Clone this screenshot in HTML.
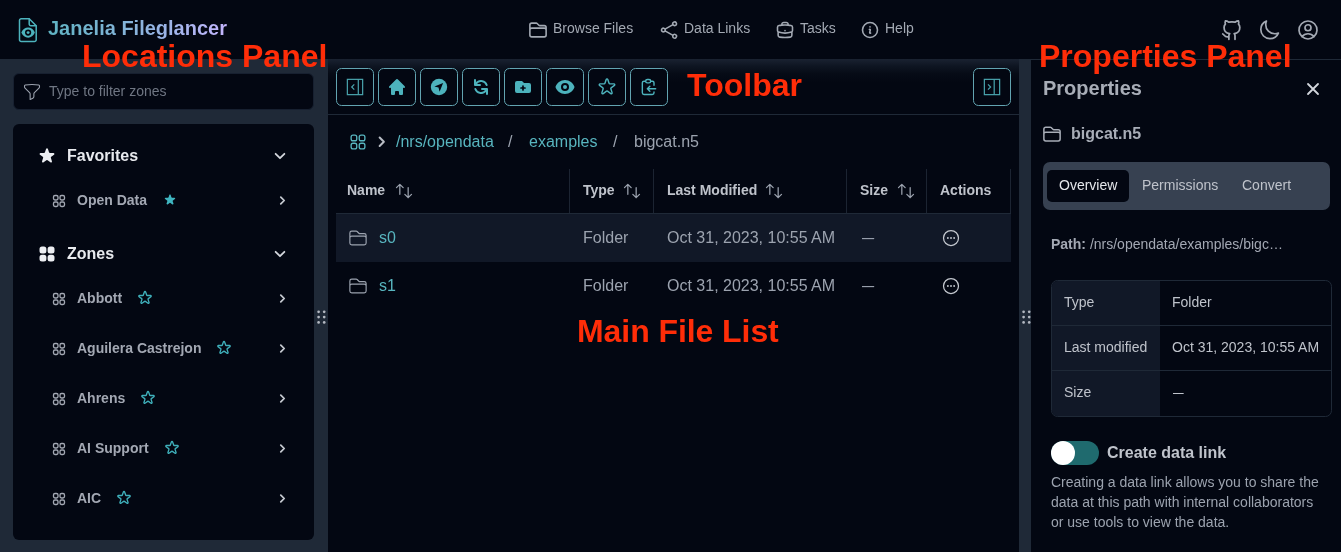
<!DOCTYPE html>
<html lang="en">
<head>
<meta charset="utf-8">
<title>Janelia Fileglancer</title>
<style>
*{box-sizing:border-box;margin:0;padding:0}
html,body{width:1341px;height:552px;overflow:hidden;background:#030712;font-family:"Liberation Sans",Arial,sans-serif;color:#9ca3af}
body{position:relative}
.abs{position:absolute}
svg{display:block;overflow:visible}
.t{position:absolute;white-space:nowrap}
.hdr,.left,.main,.props,.red{will-change:transform}
.hdr{position:absolute;left:0;top:0;width:1341px;height:59px;background:#030712}
.title{left:48px;top:17px;font-size:20px;line-height:23px;font-weight:700;background:linear-gradient(90deg,#5fb3c2 0%,#8fb4e0 55%,#c4b5fd 100%);-webkit-background-clip:text;background-clip:text;color:transparent}
.nav{top:20px;font-size:14px;line-height:16px;color:#a3a9b3}
.left{position:absolute;left:0;top:59px;width:328px;height:493px;background:#1f2937}
.filter{position:absolute;left:13px;top:14px;width:301px;height:37px;background:#030712;border-radius:6px;border:1px solid #172030}
.card{position:absolute;left:13px;top:65px;width:301px;height:416px;background:#030712;border-radius:6px}
.sec{left:54px;font-size:16px;line-height:18px;font-weight:700;color:#e8eaee}
.zone{left:64px;font-size:14px;line-height:16px;font-weight:700;color:#a3a8b3}
.main{position:absolute;left:328px;top:59px;width:691px;height:493px;background:#030712}
.tb{position:absolute;left:0;top:0;width:691px;height:56px;background:linear-gradient(180deg,#1a2231 0,#0e1522 7px,#060b16 15px,#030712 24px);border-bottom:1px solid #1f2937}
.btn{position:absolute;top:9px;width:38px;height:38px;border:1px solid #62a4b1;border-radius:5.5px;background:#030712}
.strip{position:absolute;left:1019px;top:59px;width:12px;height:493px;background:#1f2937}
.props{position:absolute;left:1031px;top:59px;width:310px;height:493px;background:#030712;border-top:1px solid #1f2937}
.red{position:absolute;font-weight:700;font-size:32px;line-height:36px;color:#ff2d08;white-space:nowrap}
.th{top:123px;font-size:14px;line-height:16px;font-weight:700;color:#bfc3cb}
.td{font-size:16px;line-height:18px;color:#9ca3af}
.tl{color:#58b5bf}
.sep{position:absolute;top:110px;width:1px;height:45px;background:#1c2432}
.p14{font-size:14px;line-height:16px}
.pc{color:#bfc3cb}
</style>
</head>
<body>
<div class="hdr">
<svg class="abs" style="left:16px;top:17px" width="24" height="26" viewBox="0 0 24 26" fill="none" stroke="#4db3bd" stroke-width="1.5" stroke-linejoin="round" stroke-linecap="round"><path d="M5.200 1.800h8l7 7v14a1.700 1.700 0 0 1-1.700 1.700H5.200a1.700 1.700 0 0 1-1.700-1.700V3.500a1.700 1.700 0 0 1 1.700-1.700z"/><path d="M13.200 2v5.100a1.700 1.700 0 0 0 1.700 1.700h5.100"/><path d="M5.300 15.600c1.500-3.400 3.900-5.100 6.800-5.100s5.300 1.700 6.800 5.100c-1.500 3.400-3.900 5.100-6.800 5.100s-5.300-1.700-6.800-5.100z" fill="#4db3bd" stroke="none"/><circle cx="12.100" cy="15.600" r="3.100" fill="#030712" stroke="none"/><circle cx="12.100" cy="15.600" r="1.450" fill="#4db3bd" stroke="none"/></svg>
<div class="t title">Janelia Fileglancer</div>
<svg class="abs" style="left:528px;top:20px" width="20" height="20" viewBox="0 0 24 24" fill="none" stroke="#a3a9b3" stroke-width="1.9" stroke-linecap="round" stroke-linejoin="round"><path d="M2.25 12.75V12A2.25 2.25 0 0 1 4.5 9.75h15A2.25 2.25 0 0 1 21.75 12v.75m-8.69-6.44-2.12-2.12a1.5 1.5 0 0 0-1.061-.44H4.5A2.25 2.25 0 0 0 2.25 6v12a2.25 2.25 0 0 0 2.25 2.25h15A2.25 2.25 0 0 0 21.75 18V9a2.25 2.25 0 0 0-2.25-2.25h-5.379a1.5 1.5 0 0 1-1.06-.44Z"/></svg>
<div class="t nav" style="left:553px">Browse Files</div>
<svg class="abs" style="left:659px;top:20px" width="20" height="20" viewBox="0 0 24 24" fill="none" stroke="#a3a9b3" stroke-width="1.9" stroke-linecap="round" stroke-linejoin="round"><path d="M7.217 10.907a2.25 2.25 0 1 0 0 2.186m0-2.186c.18.324.283.696.283 1.093s-.103.77-.283 1.093m0-2.186 9.566-5.314m-9.566 7.5 9.566 5.314m0 0a2.25 2.25 0 1 0 3.935 2.186 2.25 2.25 0 0 0-3.935-2.186Zm0-12.814a2.25 2.25 0 1 0 3.933-2.185 2.25 2.25 0 0 0-3.933 2.185Z"/></svg>
<div class="t nav" style="left:684px">Data Links</div>
<svg class="abs" style="left:775px;top:20px" width="20" height="20" viewBox="0 0 24 24" fill="none" stroke="#a3a9b3" stroke-width="1.9" stroke-linecap="round" stroke-linejoin="round"><path d="M20.25 14.15v4.25c0 1.094-.787 2.036-1.872 2.18-2.087.277-4.216.42-6.378.42s-4.291-.143-6.378-.42c-1.085-.144-1.872-1.086-1.872-2.18v-4.25m16.5 0a2.18 2.18 0 0 0 .75-1.661V8.706c0-1.081-.768-2.015-1.837-2.175a48.114 48.114 0 0 0-3.413-.387m4.5 8.006c-.194.165-.42.295-.673.38A23.978 23.978 0 0 1 12 15.75c-2.648 0-5.195-.429-7.577-1.22a2.016 2.016 0 0 1-.673-.38m0 0A2.18 2.18 0 0 1 3 12.489V8.706c0-1.081.768-2.015 1.837-2.175a48.111 48.111 0 0 1 3.413-.387m7.5 0V5.25A2.25 2.25 0 0 0 13.5 3h-3a2.25 2.25 0 0 0-2.25 2.25v.894m7.5 0a48.667 48.667 0 0 0-7.5 0M12 12.75h.008v.008H12v-.008Z"/></svg>
<div class="t nav" style="left:800px">Tasks</div>
<svg class="abs" style="left:860px;top:20px" width="20" height="20" viewBox="0 0 24 24" fill="none" stroke="#a3a9b3" stroke-width="1.9" stroke-linecap="round" stroke-linejoin="round"><path d="m11.25 11.25.041-.02a.75.75 0 0 1 1.063.852l-.708 2.836a.75.75 0 0 0 1.063.853l.041-.021M21 12a9 9 0 1 1-18 0 9 9 0 0 1 18 0Zm-9-3.75h.008v.008H12V8.25Z"/></svg>
<div class="t nav" style="left:885px">Help</div>
<svg class="abs" style="left:1221px;top:20px" width="21" height="21" viewBox="0 0 24 24" fill="none" stroke="#a3a9b3" stroke-width="2" stroke-linecap="round" stroke-linejoin="round"><path d="M9 19c-5 1.5-5-2.500-7-3m14 6v-3.870a3.370 3.370 0 0 0-.940-2.610c3.140-.350 6.440-1.540 6.440-7A5.440 5.440 0 0 0 20 4.770 5.070 5.070 0 0 0 19.910 1S18.730.650 16 2.480a13.380 13.380 0 0 0-7 0C6.270.650 5.090 1 5.090 1A5.070 5.070 0 0 0 5 4.770a5.440 5.440 0 0 0-1.500 3.780c0 5.420 3.300 6.610 6.440 7A3.370 3.370 0 0 0 9 18.130V22"/></svg>
<svg class="abs" style="left:1258.1px;top:18.9px" width="22.5" height="22.5" viewBox="0 0 24 24" fill="none" stroke="#a3a9b3" stroke-width="1.8" stroke-linecap="round" stroke-linejoin="round"><path d="M21.752 15.002A9.72 9.72 0 0 1 18 15.75c-5.385 0-9.75-4.365-9.75-9.75 0-1.33.266-2.597.748-3.752A9.753 9.753 0 0 0 3 11.25C3 16.635 7.365 21 12.75 21a9.753 9.753 0 0 0 9.002-5.998Z"/></svg>
<svg class="abs" style="left:1296px;top:18px" width="24" height="24" viewBox="0 0 24 24" fill="none" stroke="#a3a9b3" stroke-width="1.7" stroke-linecap="round" stroke-linejoin="round"><path d="M17.982 18.725A7.488 7.488 0 0 0 12 15.75a7.488 7.488 0 0 0-5.982 2.975m11.963 0a9 9 0 1 0-11.963 0m11.963 0A8.966 8.966 0 0 1 12 21a8.966 8.966 0 0 1-5.982-2.275M15 9.75a3 3 0 1 1-6 0 3 3 0 0 1 6 0Z"/></svg>
</div>
<div class="left">
<div class="filter"><svg class="abs" style="left:8px;top:8px" width="20" height="20" viewBox="0 0 24 24" fill="none" stroke="#9ca3af" stroke-width="1.3" stroke-linecap="round" stroke-linejoin="round"><path d="M12 3c2.755 0 5.455.232 8.083.678.533.09.917.556.917 1.096v1.044a2.250 2.250 0 0 1-.659 1.591l-5.432 5.432a2.250 2.250 0 0 0-.659 1.591v2.927a2.250 2.250 0 0 1-1.244 2.013L9.750 21v-6.568a2.250 2.250 0 0 0-.659-1.591L3.659 7.409A2.250 2.250 0 0 1 3 5.818V4.774c0-.540.384-1.006.917-1.096A48.320 48.320 0 0 1 12 3Z"/></svg><span class="t p14" style="left:35px;top:9px;color:#6f7683">Type to filter zones</span></div>
<div class="card">
<svg class="abs" style="left:24px;top:21.5px" width="20" height="20" viewBox="0 0 20 20" fill="#eceef2"><path d="M9.049 2.927c.3-.921 1.603-.921 1.902 0l1.070 3.292a1 1 0 00.950.690h3.462c.969 0 1.371 1.240.588 1.810l-2.800 2.034a1 1 0 00-.364 1.118l1.070 3.292c.3.921-.755 1.688-1.540 1.118l-2.800-2.034a1 1 0 00-1.175 0l-2.800 2.034c-.784.570-1.838-.197-1.539-1.118l1.070-3.292a1 1 0 00-.364-1.118L2.980 8.720c-.783-.570-.380-1.810.588-1.810h3.461a1 1 0 00.951-.690l1.070-3.292z"/></svg>
<div class="t sec" style="top:23px">Favorites</div>
<svg class="abs" style="left:260px;top:25px" width="14" height="14" viewBox="0 0 24 24" fill="none" stroke="#d3d6dc" stroke-width="3.1" stroke-linecap="round" stroke-linejoin="round"><path d="m19.500 8.250-7.500 7.500-7.500-7.500"/></svg>
<svg class="abs" style="left:24px;top:120px" width="20" height="20" viewBox="0 0 24 24" fill="#eceef2"><path d="M3 6a3 3 0 0 1 3-3h2.250a3 3 0 0 1 3 3v2.250a3 3 0 0 1-3 3H6a3 3 0 0 1-3-3V6Zm9.750 0a3 3 0 0 1 3-3H18a3 3 0 0 1 3 3v2.250a3 3 0 0 1-3 3h-2.250a3 3 0 0 1-3-3V6ZM3 15.750a3 3 0 0 1 3-3h2.250a3 3 0 0 1 3 3V18a3 3 0 0 1-3 3H6a3 3 0 0 1-3-3v-2.250Zm9.750 0a3 3 0 0 1 3-3H18a3 3 0 0 1 3 3V18a3 3 0 0 1-3 3h-2.250a3 3 0 0 1-3-3v-2.250Z"/></svg>
<div class="t sec" style="top:121px">Zones</div>
<svg class="abs" style="left:260px;top:123px" width="14" height="14" viewBox="0 0 24 24" fill="none" stroke="#d3d6dc" stroke-width="3.1" stroke-linecap="round" stroke-linejoin="round"><path d="m19.500 8.250-7.500 7.500-7.500-7.500"/></svg>
<svg class="abs" style="left:38px;top:69px" width="16" height="16" viewBox="0 0 24 24" fill="none" stroke="#a3a8b3" stroke-width="2" stroke-linecap="round" stroke-linejoin="round"><path d="M3.750 6A2.250 2.250 0 0 1 6 3.750h2.250A2.250 2.250 0 0 1 10.500 6v2.250a2.250 2.250 0 0 1-2.250 2.250H6a2.250 2.250 0 0 1-2.250-2.250V6ZM3.750 15.750A2.250 2.250 0 0 1 6 13.500h2.250a2.250 2.250 0 0 1 2.250 2.250V18a2.250 2.250 0 0 1-2.250 2.250H6A2.250 2.250 0 0 1 3.750 18v-2.250ZM13.500 6a2.250 2.250 0 0 1 2.250-2.250H18A2.250 2.250 0 0 1 20.250 6v2.250A2.250 2.250 0 0 1 18 10.500h-2.250a2.250 2.250 0 0 1-2.250-2.250V6ZM13.500 15.750a2.250 2.250 0 0 1 2.250-2.250H18a2.250 2.250 0 0 1 2.250 2.250V18A2.250 2.250 0 0 1 18 20.250h-2.250A2.250 2.250 0 0 1 13.500 18v-2.250Z"/></svg>
<div class="t zone" style="top:68px">Open Data</div>
<svg class="abs" style="left:150px;top:68.5px" width="14" height="14" viewBox="0 0 20 20" fill="#3fb5c0"><path d="M9.049 2.927c.3-.921 1.603-.921 1.902 0l1.070 3.292a1 1 0 00.950.690h3.462c.969 0 1.371 1.240.588 1.810l-2.800 2.034a1 1 0 00-.364 1.118l1.070 3.292c.3.921-.755 1.688-1.540 1.118l-2.800-2.034a1 1 0 00-1.175 0l-2.800 2.034c-.784.570-1.838-.197-1.539-1.118l1.070-3.292a1 1 0 00-.364-1.118L2.980 8.720c-.783-.570-.380-1.810.588-1.810h3.461a1 1 0 00.951-.690l1.070-3.292z"/></svg>
<svg class="abs" style="left:263.5px;top:71px" width="11" height="11" viewBox="0 0 24 24" fill="none" stroke="#c5c9d0" stroke-width="3.8" stroke-linecap="round" stroke-linejoin="round"><path d="m8.250 4.500 7.500 7.500-7.500 7.500"/></svg>
<svg class="abs" style="left:38px;top:167px" width="16" height="16" viewBox="0 0 24 24" fill="none" stroke="#a3a8b3" stroke-width="2" stroke-linecap="round" stroke-linejoin="round"><path d="M3.750 6A2.250 2.250 0 0 1 6 3.750h2.250A2.250 2.250 0 0 1 10.500 6v2.250a2.250 2.250 0 0 1-2.250 2.250H6a2.250 2.250 0 0 1-2.250-2.250V6ZM3.750 15.750A2.250 2.250 0 0 1 6 13.500h2.250a2.250 2.250 0 0 1 2.250 2.250V18a2.250 2.250 0 0 1-2.250 2.250H6A2.250 2.250 0 0 1 3.750 18v-2.250ZM13.500 6a2.250 2.250 0 0 1 2.250-2.250H18A2.250 2.250 0 0 1 20.250 6v2.250A2.250 2.250 0 0 1 18 10.500h-2.250a2.250 2.250 0 0 1-2.250-2.250V6ZM13.500 15.750a2.250 2.250 0 0 1 2.250-2.250H18a2.250 2.250 0 0 1 2.250 2.250V18A2.250 2.250 0 0 1 18 20.250h-2.250A2.250 2.250 0 0 1 13.500 18v-2.250Z"/></svg>
<div class="t zone" style="top:166px">Abbott</div>
<svg class="abs" style="left:124px;top:166px" width="16" height="16" viewBox="0 0 24 24" fill="none" stroke="#3fb0bb" stroke-width="2" stroke-linecap="round" stroke-linejoin="round"><path d="M11.049 2.927c.3-.921 1.603-.921 1.902 0l1.519 4.674a1 1 0 00.950.690h4.915c.969 0 1.371 1.240.588 1.810l-3.976 2.888a1 1 0 00-.363 1.118l1.518 4.674c.3.922-.755 1.688-1.538 1.118l-3.976-2.888a1 1 0 00-1.176 0l-3.976 2.888c-.783.570-1.838-.197-1.538-1.118l1.518-4.674a1 1 0 00-.363-1.118l-3.976-2.888c-.784-.570-.380-1.810.588-1.810h4.914a1 1 0 00.951-.690l1.519-4.674z"/></svg>
<svg class="abs" style="left:263.5px;top:169px" width="11" height="11" viewBox="0 0 24 24" fill="none" stroke="#c5c9d0" stroke-width="3.8" stroke-linecap="round" stroke-linejoin="round"><path d="m8.250 4.500 7.500 7.500-7.500 7.500"/></svg>
<svg class="abs" style="left:38px;top:217px" width="16" height="16" viewBox="0 0 24 24" fill="none" stroke="#a3a8b3" stroke-width="2" stroke-linecap="round" stroke-linejoin="round"><path d="M3.750 6A2.250 2.250 0 0 1 6 3.750h2.250A2.250 2.250 0 0 1 10.500 6v2.250a2.250 2.250 0 0 1-2.250 2.250H6a2.250 2.250 0 0 1-2.250-2.250V6ZM3.750 15.750A2.250 2.250 0 0 1 6 13.500h2.250a2.250 2.250 0 0 1 2.250 2.250V18a2.250 2.250 0 0 1-2.250 2.250H6A2.250 2.250 0 0 1 3.750 18v-2.250ZM13.500 6a2.250 2.250 0 0 1 2.250-2.250H18A2.250 2.250 0 0 1 20.250 6v2.250A2.250 2.250 0 0 1 18 10.500h-2.250a2.250 2.250 0 0 1-2.250-2.250V6ZM13.500 15.750a2.250 2.250 0 0 1 2.250-2.250H18a2.250 2.250 0 0 1 2.250 2.250V18A2.250 2.250 0 0 1 18 20.250h-2.250A2.250 2.250 0 0 1 13.500 18v-2.250Z"/></svg>
<div class="t zone" style="top:216px">Aguilera Castrejon</div>
<svg class="abs" style="left:203px;top:216px" width="16" height="16" viewBox="0 0 24 24" fill="none" stroke="#3fb0bb" stroke-width="2" stroke-linecap="round" stroke-linejoin="round"><path d="M11.049 2.927c.3-.921 1.603-.921 1.902 0l1.519 4.674a1 1 0 00.950.690h4.915c.969 0 1.371 1.240.588 1.810l-3.976 2.888a1 1 0 00-.363 1.118l1.518 4.674c.3.922-.755 1.688-1.538 1.118l-3.976-2.888a1 1 0 00-1.176 0l-3.976 2.888c-.783.570-1.838-.197-1.538-1.118l1.518-4.674a1 1 0 00-.363-1.118l-3.976-2.888c-.784-.570-.380-1.810.588-1.810h4.914a1 1 0 00.951-.690l1.519-4.674z"/></svg>
<svg class="abs" style="left:263.5px;top:219px" width="11" height="11" viewBox="0 0 24 24" fill="none" stroke="#c5c9d0" stroke-width="3.8" stroke-linecap="round" stroke-linejoin="round"><path d="m8.250 4.500 7.500 7.500-7.500 7.500"/></svg>
<svg class="abs" style="left:38px;top:267px" width="16" height="16" viewBox="0 0 24 24" fill="none" stroke="#a3a8b3" stroke-width="2" stroke-linecap="round" stroke-linejoin="round"><path d="M3.750 6A2.250 2.250 0 0 1 6 3.750h2.250A2.250 2.250 0 0 1 10.500 6v2.250a2.250 2.250 0 0 1-2.250 2.250H6a2.250 2.250 0 0 1-2.250-2.250V6ZM3.750 15.750A2.250 2.250 0 0 1 6 13.500h2.250a2.250 2.250 0 0 1 2.250 2.250V18a2.250 2.250 0 0 1-2.250 2.250H6A2.250 2.250 0 0 1 3.750 18v-2.250ZM13.500 6a2.250 2.250 0 0 1 2.250-2.250H18A2.250 2.250 0 0 1 20.250 6v2.250A2.250 2.250 0 0 1 18 10.500h-2.250a2.250 2.250 0 0 1-2.250-2.250V6ZM13.500 15.750a2.250 2.250 0 0 1 2.250-2.250H18a2.250 2.250 0 0 1 2.250 2.250V18A2.250 2.250 0 0 1 18 20.250h-2.250A2.250 2.250 0 0 1 13.500 18v-2.250Z"/></svg>
<div class="t zone" style="top:266px">Ahrens</div>
<svg class="abs" style="left:127px;top:266px" width="16" height="16" viewBox="0 0 24 24" fill="none" stroke="#3fb0bb" stroke-width="2" stroke-linecap="round" stroke-linejoin="round"><path d="M11.049 2.927c.3-.921 1.603-.921 1.902 0l1.519 4.674a1 1 0 00.950.690h4.915c.969 0 1.371 1.240.588 1.810l-3.976 2.888a1 1 0 00-.363 1.118l1.518 4.674c.3.922-.755 1.688-1.538 1.118l-3.976-2.888a1 1 0 00-1.176 0l-3.976 2.888c-.783.570-1.838-.197-1.538-1.118l1.518-4.674a1 1 0 00-.363-1.118l-3.976-2.888c-.784-.570-.380-1.810.588-1.810h4.914a1 1 0 00.951-.690l1.519-4.674z"/></svg>
<svg class="abs" style="left:263.5px;top:269px" width="11" height="11" viewBox="0 0 24 24" fill="none" stroke="#c5c9d0" stroke-width="3.8" stroke-linecap="round" stroke-linejoin="round"><path d="m8.250 4.500 7.500 7.500-7.500 7.500"/></svg>
<svg class="abs" style="left:38px;top:317px" width="16" height="16" viewBox="0 0 24 24" fill="none" stroke="#a3a8b3" stroke-width="2" stroke-linecap="round" stroke-linejoin="round"><path d="M3.750 6A2.250 2.250 0 0 1 6 3.750h2.250A2.250 2.250 0 0 1 10.500 6v2.250a2.250 2.250 0 0 1-2.250 2.250H6a2.250 2.250 0 0 1-2.250-2.250V6ZM3.750 15.750A2.250 2.250 0 0 1 6 13.500h2.250a2.250 2.250 0 0 1 2.250 2.250V18a2.250 2.250 0 0 1-2.250 2.250H6A2.250 2.250 0 0 1 3.750 18v-2.250ZM13.500 6a2.250 2.250 0 0 1 2.250-2.250H18A2.250 2.250 0 0 1 20.250 6v2.250A2.250 2.250 0 0 1 18 10.500h-2.250a2.250 2.250 0 0 1-2.250-2.250V6ZM13.500 15.750a2.250 2.250 0 0 1 2.250-2.250H18a2.250 2.250 0 0 1 2.250 2.250V18A2.250 2.250 0 0 1 18 20.250h-2.250A2.250 2.250 0 0 1 13.500 18v-2.250Z"/></svg>
<div class="t zone" style="top:316px">AI Support</div>
<svg class="abs" style="left:151px;top:316px" width="16" height="16" viewBox="0 0 24 24" fill="none" stroke="#3fb0bb" stroke-width="2" stroke-linecap="round" stroke-linejoin="round"><path d="M11.049 2.927c.3-.921 1.603-.921 1.902 0l1.519 4.674a1 1 0 00.950.690h4.915c.969 0 1.371 1.240.588 1.810l-3.976 2.888a1 1 0 00-.363 1.118l1.518 4.674c.3.922-.755 1.688-1.538 1.118l-3.976-2.888a1 1 0 00-1.176 0l-3.976 2.888c-.783.570-1.838-.197-1.538-1.118l1.518-4.674a1 1 0 00-.363-1.118l-3.976-2.888c-.784-.570-.380-1.810.588-1.810h4.914a1 1 0 00.951-.690l1.519-4.674z"/></svg>
<svg class="abs" style="left:263.5px;top:319px" width="11" height="11" viewBox="0 0 24 24" fill="none" stroke="#c5c9d0" stroke-width="3.8" stroke-linecap="round" stroke-linejoin="round"><path d="m8.250 4.500 7.500 7.500-7.500 7.500"/></svg>
<svg class="abs" style="left:38px;top:367px" width="16" height="16" viewBox="0 0 24 24" fill="none" stroke="#a3a8b3" stroke-width="2" stroke-linecap="round" stroke-linejoin="round"><path d="M3.750 6A2.250 2.250 0 0 1 6 3.750h2.250A2.250 2.250 0 0 1 10.500 6v2.250a2.250 2.250 0 0 1-2.250 2.250H6a2.250 2.250 0 0 1-2.250-2.250V6ZM3.750 15.750A2.250 2.250 0 0 1 6 13.500h2.250a2.250 2.250 0 0 1 2.250 2.250V18a2.250 2.250 0 0 1-2.250 2.250H6A2.250 2.250 0 0 1 3.750 18v-2.250ZM13.500 6a2.250 2.250 0 0 1 2.250-2.250H18A2.250 2.250 0 0 1 20.250 6v2.250A2.250 2.250 0 0 1 18 10.500h-2.250a2.250 2.250 0 0 1-2.250-2.250V6ZM13.500 15.750a2.250 2.250 0 0 1 2.250-2.250H18a2.250 2.250 0 0 1 2.250 2.250V18A2.250 2.250 0 0 1 18 20.250h-2.250A2.250 2.250 0 0 1 13.500 18v-2.250Z"/></svg>
<div class="t zone" style="top:366px">AIC</div>
<svg class="abs" style="left:103px;top:366px" width="16" height="16" viewBox="0 0 24 24" fill="none" stroke="#3fb0bb" stroke-width="2" stroke-linecap="round" stroke-linejoin="round"><path d="M11.049 2.927c.3-.921 1.603-.921 1.902 0l1.519 4.674a1 1 0 00.950.690h4.915c.969 0 1.371 1.240.588 1.810l-3.976 2.888a1 1 0 00-.363 1.118l1.518 4.674c.3.922-.755 1.688-1.538 1.118l-3.976-2.888a1 1 0 00-1.176 0l-3.976 2.888c-.783.570-1.838-.197-1.538-1.118l1.518-4.674a1 1 0 00-.363-1.118l-3.976-2.888c-.784-.570-.380-1.810.588-1.810h4.914a1 1 0 00.951-.690l1.519-4.674z"/></svg>
<svg class="abs" style="left:263.5px;top:369px" width="11" height="11" viewBox="0 0 24 24" fill="none" stroke="#c5c9d0" stroke-width="3.8" stroke-linecap="round" stroke-linejoin="round"><path d="m8.250 4.500 7.500 7.500-7.500 7.500"/></svg>
</div>
<svg class="abs" style="left:316.5px;top:251px" width="9" height="14" viewBox="0 0 9 14" fill="#b4b9c2"><circle cx="1.6" cy="1.8" r="1.350"/><circle cx="1.6" cy="7.1" r="1.350"/><circle cx="1.6" cy="12.4" r="1.350"/><circle cx="7.2" cy="1.8" r="1.350"/><circle cx="7.2" cy="7.1" r="1.350"/><circle cx="7.2" cy="12.4" r="1.350"/></svg>
</div>
<div class="main">
<div class="tb">
<div class="btn" style="left:8px"><svg class="abs" style="left:8px;top:8px" width="20" height="20" viewBox="0 0 20 20" fill="none" stroke="#4aa5af" stroke-width="1.200" stroke-linejoin="miter" stroke-linecap="butt"><rect x="2.350" y="2.350" width="15.300" height="15.300"/><path d="M13.300 2.350v15.300"/><path d="M9.300 7.400 6.700 10l2.600 2.600"/></svg></div>
<div class="btn" style="left:50px"><svg class="abs" style="left:8px;top:8px" width="20" height="20" viewBox="0 0 20 20" fill="#4db3bd"><path d="M10.707 2.293a1 1 0 00-1.414 0l-7 7a1 1 0 001.414 1.414L4 10.414V17a1 1 0 001 1h2a1 1 0 001-1v-2a1 1 0 011-1h2a1 1 0 011 1v2a1 1 0 001 1h2a1 1 0 001-1v-6.586l.293.293a1 1 0 001.414-1.414l-7-7z"/></svg></div>
<div class="btn" style="left:92px"><svg class="abs" style="left:8px;top:8px" width="20" height="20" viewBox="0 0 20 20"><circle cx="10" cy="10" r="8.200" fill="#4db3bd"/><path d="M14.100 6 5.400 9.500l4.100 1.100 1.100 4.100z" fill="#030712"/></svg></div>
<div class="btn" style="left:134px"><svg class="abs" style="left:8px;top:8px" width="20" height="20" viewBox="0 0 20 20" fill="#4db3bd"><path d="M4 2a1 1 0 011 1v2.101a7.002 7.002 0 0111.601 2.566 1 1 0 11-1.885.666A5.002 5.002 0 005.999 7H9a1 1 0 010 2H4a1 1 0 01-1-1V3a1 1 0 011-1zm.008 9.057a1 1 0 011.276.610A5.002 5.002 0 0014.001 13H11a1 1 0 110-2h5a1 1 0 011 1v5a1 1 0 11-2 0v-2.101a7.002 7.002 0 01-11.601-2.566 1 1 0 01.610-1.276z"/></svg></div>
<div class="btn" style="left:176px"><svg class="abs" style="left:8px;top:8px" width="20" height="20" viewBox="0 0 20 20"><path d="M2 6a2 2 0 012-2h5l2 2h5a2 2 0 012 2v6a2 2 0 01-2 2H4a2 2 0 01-2-2V6z" fill="#4db3bd"/><path d="M8 11h4m-2-2v4" stroke="#030712" stroke-width="1.700" stroke-linecap="round" fill="none"/></svg></div>
<div class="btn" style="left:218px"><svg class="abs" style="left:8px;top:8px" width="20" height="20" viewBox="0 0 20 20" fill="#4db3bd"><path d="M10 12a2 2 0 100-4 2 2 0 000 4z M.458 10C1.732 5.943 5.522 3 10 3s8.268 2.943 9.542 7c-1.274 4.057-5.064 7-9.542 7S1.732 14.057.458 10zM14 10a4 4 0 11-8 0 4 4 0 018 0z" fill-rule="evenodd" clip-rule="evenodd"/></svg></div>
<div class="btn" style="left:260px"><svg class="abs" style="left:8px;top:8px" width="20" height="20" viewBox="0 0 24 24" fill="none" stroke="#4db3bd" stroke-width="1.7" stroke-linecap="round" stroke-linejoin="round"><path d="M11.049 2.927c.3-.921 1.603-.921 1.902 0l1.519 4.674a1 1 0 00.950.690h4.915c.969 0 1.371 1.240.588 1.810l-3.976 2.888a1 1 0 00-.363 1.118l1.518 4.674c.3.922-.755 1.688-1.538 1.118l-3.976-2.888a1 1 0 00-1.176 0l-3.976 2.888c-.783.570-1.838-.197-1.538-1.118l1.518-4.674a1 1 0 00-.363-1.118l-3.976-2.888c-.784-.570-.380-1.810.588-1.810h4.914a1 1 0 00.951-.690l1.519-4.674z"/></svg></div>
<div class="btn" style="left:302px"><svg class="abs" style="left:8px;top:8px" width="20" height="20" viewBox="0 0 24 24" fill="none" stroke="#4db3bd" stroke-width="1.7" stroke-linecap="round" stroke-linejoin="round"><path d="M8 5H6a2 2 0 00-2 2v12a2 2 0 002 2h10a2 2 0 002-2v-1M8 5a2 2 0 002 2h2a2 2 0 002-2M8 5a2 2 0 012-2h2a2 2 0 012 2m0 0h2a2 2 0 012 2v3m2 4H10m0 0l3-3m-3 3l3 3"/></svg></div>
<div class="btn" style="left:645px"><svg class="abs" style="left:8px;top:8px" width="20" height="20" viewBox="0 0 20 20" fill="none" stroke="#4aa5af" stroke-width="1.200" stroke-linejoin="miter" stroke-linecap="butt"><rect x="2.350" y="2.350" width="15.300" height="15.300"/><path d="M12.200 2.350v15.300"/><path d="M6 7.400 8.600 10 6 12.600"/></svg></div>
</div>
<svg class="abs" style="left:20px;top:73px" width="20" height="20" viewBox="0 0 24 24" fill="none" stroke="#58b5bf" stroke-width="1.6" stroke-linecap="round" stroke-linejoin="round"><path d="M3.750 6A2.250 2.250 0 0 1 6 3.750h2.250A2.250 2.250 0 0 1 10.500 6v2.250a2.250 2.250 0 0 1-2.250 2.250H6a2.250 2.250 0 0 1-2.250-2.250V6ZM3.750 15.750A2.250 2.250 0 0 1 6 13.500h2.250a2.250 2.250 0 0 1 2.250 2.250V18a2.250 2.250 0 0 1-2.250 2.250H6A2.250 2.250 0 0 1 3.750 18v-2.250ZM13.500 6a2.250 2.250 0 0 1 2.250-2.250H18A2.250 2.250 0 0 1 20.250 6v2.250A2.250 2.250 0 0 1 18 10.500h-2.250a2.250 2.250 0 0 1-2.250-2.250V6ZM13.500 15.750a2.250 2.250 0 0 1 2.250-2.250H18a2.250 2.250 0 0 1 2.250 2.250V18A2.250 2.250 0 0 1 18 20.250h-2.250A2.250 2.250 0 0 1 13.500 18v-2.250Z"/></svg>
<svg class="abs" style="left:47px;top:76.25px" width="13.5" height="13.5" viewBox="0 0 24 24" fill="none" stroke="#b9bdc5" stroke-width="3.55" stroke-linecap="round" stroke-linejoin="round"><path d="m8.250 4.500 7.500 7.500-7.500 7.500"/></svg>
<div class="t td tl" style="left:68px;top:74px">/nrs/opendata</div>
<div class="t td" style="left:180px;top:74px">/</div>
<div class="t td tl" style="left:201px;top:74px">examples</div>
<div class="t td" style="left:285px;top:74px">/</div>
<div class="t td" style="left:306px;top:74px">bigcat.n5</div>
<div class="t th" style="left:19px">Name</div>
<svg class="abs" style="left:66px;top:122px" width="20" height="20" viewBox="0 0 24 24" fill="none" stroke="#9ca3af" stroke-width="1.5" stroke-linecap="round" stroke-linejoin="round"><path d="M7 16V4m0 0L3 8m4-4l4 4m6 0v12m0 0l4-4m-4 4l-4-4"/></svg>
<div class="t th" style="left:255px">Type</div>
<svg class="abs" style="left:294px;top:122px" width="20" height="20" viewBox="0 0 24 24" fill="none" stroke="#9ca3af" stroke-width="1.5" stroke-linecap="round" stroke-linejoin="round"><path d="M7 16V4m0 0L3 8m4-4l4 4m6 0v12m0 0l4-4m-4 4l-4-4"/></svg>
<div class="t th" style="left:339px">Last Modified</div>
<svg class="abs" style="left:436px;top:122px" width="20" height="20" viewBox="0 0 24 24" fill="none" stroke="#9ca3af" stroke-width="1.5" stroke-linecap="round" stroke-linejoin="round"><path d="M7 16V4m0 0L3 8m4-4l4 4m6 0v12m0 0l4-4m-4 4l-4-4"/></svg>
<div class="t th" style="left:532px">Size</div>
<svg class="abs" style="left:568px;top:122px" width="20" height="20" viewBox="0 0 24 24" fill="none" stroke="#9ca3af" stroke-width="1.5" stroke-linecap="round" stroke-linejoin="round"><path d="M7 16V4m0 0L3 8m4-4l4 4m6 0v12m0 0l4-4m-4 4l-4-4"/></svg>
<div class="t th" style="left:612px">Actions</div>
<div class="sep" style="left:241px"></div>
<div class="sep" style="left:325px"></div>
<div class="sep" style="left:518px"></div>
<div class="sep" style="left:598px"></div>
<div class="sep" style="left:682px"></div>
<div class="abs" style="left:8px;top:154px;width:675px;height:49px;background:#111827;border-top:1px solid #1f2937"></div>
<svg class="abs" style="left:20px;top:169px" width="20" height="20" viewBox="0 0 24 24" fill="none" stroke="#9ca3af" stroke-width="1.4" stroke-linecap="round" stroke-linejoin="round"><path d="M2.25 12.75V12A2.25 2.25 0 0 1 4.5 9.75h15A2.25 2.25 0 0 1 21.75 12v.75m-8.69-6.44-2.12-2.12a1.5 1.5 0 0 0-1.061-.44H4.5A2.25 2.25 0 0 0 2.25 6v12a2.25 2.25 0 0 0 2.25 2.25h15A2.25 2.25 0 0 0 21.75 18V9a2.25 2.25 0 0 0-2.25-2.25h-5.379a1.5 1.5 0 0 1-1.06-.44Z"/></svg>
<div class="t td tl" style="left:51px;top:170px">s0</div>
<div class="t td" style="left:255px;top:170px">Folder</div>
<div class="t td" style="left:339px;top:170px">Oct 31, 2023, 10:55 AM</div>
<div class="t td" style="left:534px;top:170px;transform:scaleX(.76);transform-origin:0 0">—</div>
<svg class="abs" style="left:613px;top:169px" width="20" height="20" viewBox="0 0 24 24" fill="none" stroke="#c5c9d0" stroke-width="1.5" stroke-linecap="round" stroke-linejoin="round"><path d="M8.625 12a.375.375 0 1 1-.750 0 .375.375 0 0 1 .750 0Zm0 0H8.250m4.125 0a.375.375 0 1 1-.750 0 .375.375 0 0 1 .750 0Zm0 0H12m4.125 0a.375.375 0 1 1-.750 0 .375.375 0 0 1 .750 0Zm0 0h-.375M21 12a9 9 0 1 1-18 0 9 9 0 0 1 18 0Z"/></svg>
<svg class="abs" style="left:20px;top:217px" width="20" height="20" viewBox="0 0 24 24" fill="none" stroke="#9ca3af" stroke-width="1.4" stroke-linecap="round" stroke-linejoin="round"><path d="M2.25 12.75V12A2.25 2.25 0 0 1 4.5 9.75h15A2.25 2.25 0 0 1 21.75 12v.75m-8.69-6.44-2.12-2.12a1.5 1.5 0 0 0-1.061-.44H4.5A2.25 2.25 0 0 0 2.25 6v12a2.25 2.25 0 0 0 2.25 2.25h15A2.25 2.25 0 0 0 21.75 18V9a2.25 2.25 0 0 0-2.25-2.25h-5.379a1.5 1.5 0 0 1-1.06-.44Z"/></svg>
<div class="t td tl" style="left:51px;top:218px">s1</div>
<div class="t td" style="left:255px;top:218px">Folder</div>
<div class="t td" style="left:339px;top:218px">Oct 31, 2023, 10:55 AM</div>
<div class="t td" style="left:534px;top:218px;transform:scaleX(.76);transform-origin:0 0">—</div>
<svg class="abs" style="left:613px;top:217px" width="20" height="20" viewBox="0 0 24 24" fill="none" stroke="#c5c9d0" stroke-width="1.5" stroke-linecap="round" stroke-linejoin="round"><path d="M8.625 12a.375.375 0 1 1-.750 0 .375.375 0 0 1 .750 0Zm0 0H8.250m4.125 0a.375.375 0 1 1-.750 0 .375.375 0 0 1 .750 0Zm0 0H12m4.125 0a.375.375 0 1 1-.750 0 .375.375 0 0 1 .750 0Zm0 0h-.375M21 12a9 9 0 1 1-18 0 9 9 0 0 1 18 0Z"/></svg>
</div>
<div class="strip"><svg class="abs" style="left:2.5px;top:251px" width="9" height="14" viewBox="0 0 9 14" fill="#b4b9c2"><circle cx="1.6" cy="1.8" r="1.350"/><circle cx="1.6" cy="7.1" r="1.350"/><circle cx="1.6" cy="12.4" r="1.350"/><circle cx="7.2" cy="1.8" r="1.350"/><circle cx="7.2" cy="7.1" r="1.350"/><circle cx="7.2" cy="12.4" r="1.350"/></svg></div>
<div class="props">
<div class="t" style="left:12px;top:17px;font-size:20px;line-height:23px;font-weight:700;color:#a8adb7">Properties</div>
<svg class="abs" style="left:272.20000000000005px;top:19.099999999999994px" width="20" height="20" viewBox="0 0 24 24" fill="none" stroke="#d3d6dc" stroke-width="2.2" stroke-linecap="round" stroke-linejoin="round"><path d="M6 18 18 6M6 6l12 12"/></svg>
<svg class="abs" style="left:11px;top:64px" width="20" height="20" viewBox="0 0 24 24" fill="none" stroke="#a8adb7" stroke-width="1.8" stroke-linecap="round" stroke-linejoin="round"><path d="M2.25 12.75V12A2.25 2.25 0 0 1 4.5 9.75h15A2.25 2.25 0 0 1 21.75 12v.75m-8.69-6.44-2.12-2.12a1.5 1.5 0 0 0-1.061-.44H4.5A2.25 2.25 0 0 0 2.25 6v12a2.25 2.25 0 0 0 2.25 2.25h15A2.25 2.25 0 0 0 21.75 18V9a2.25 2.25 0 0 0-2.25-2.25h-5.379a1.5 1.5 0 0 1-1.06-.44Z"/></svg>
<div class="t" style="left:40px;top:65px;font-size:16px;line-height:18px;font-weight:700;color:#a8adb7">bigcat.n5</div>
<div class="abs" style="left:12px;top:102px;width:287px;height:48px;background:#374151;border-radius:7px"></div>
<div class="abs" style="left:16px;top:110px;width:82px;height:32px;background:#030712;border-radius:5px"></div>
<div class="t p14" style="left:28px;top:117px;color:#e5e7eb">Overview</div>
<div class="t p14 pc" style="left:111px;top:117px">Permissions</div>
<div class="t p14 pc" style="left:211px;top:117px">Convert</div>
<div class="t p14" style="left:20px;top:176px;color:#a3a8b3"><b>Path:</b> /nrs/opendata/examples/bigc…</div>
<div class="abs" style="left:20px;top:220px;width:281px;height:137px;border:1px solid #1f2937;border-radius:6.5px;overflow:hidden">
<div class="abs" style="left:0;top:0;width:108px;height:136px;background:#111827"></div>
<div class="abs" style="left:0;top:44px;width:281px;height:1px;background:#1f2937"></div>
<div class="abs" style="left:0;top:89px;width:281px;height:1px;background:#1f2937"></div>
<div class="t p14 pc" style="left:12px;top:13px">Type</div>
<div class="t p14 pc" style="left:12px;top:58px">Last modified</div>
<div class="t p14 pc" style="left:12px;top:103px">Size</div>
<div class="t p14 pc" style="left:120px;top:13px">Folder</div>
<div class="t p14 pc" style="left:120px;top:58px">Oct 31, 2023, 10:55 AM</div>
<div class="t p14 pc" style="left:121px;top:103px;transform:scaleX(.76);transform-origin:0 0">—</div>
</div>
<div class="abs" style="left:20px;top:381px;width:48px;height:24px;border-radius:12px;background:#1f6a6e"></div>
<div class="abs" style="left:20px;top:381px;width:24px;height:24px;border-radius:12px;background:#fff"></div>
<div class="t" style="left:76px;top:384px;font-size:16px;line-height:18px;font-weight:700;color:#bfc3cb">Create data link</div>
<div class="abs" style="left:20px;top:412px;width:272px;font-size:14px;line-height:20px;color:#9ca3af">Creating a data link allows you to share the data at this path with internal collaborators or use tools to view the data.</div>
</div>
<div class="red" style="left:82px;top:38px">Locations Panel</div>
<div class="red" style="left:687px;top:67px">Toolbar</div>
<div class="red" style="left:1038.500px;top:38px">Properties Panel</div>
<div class="red" style="left:577px;top:313px;letter-spacing:-0.07px">Main File List</div>
</body>
</html>
